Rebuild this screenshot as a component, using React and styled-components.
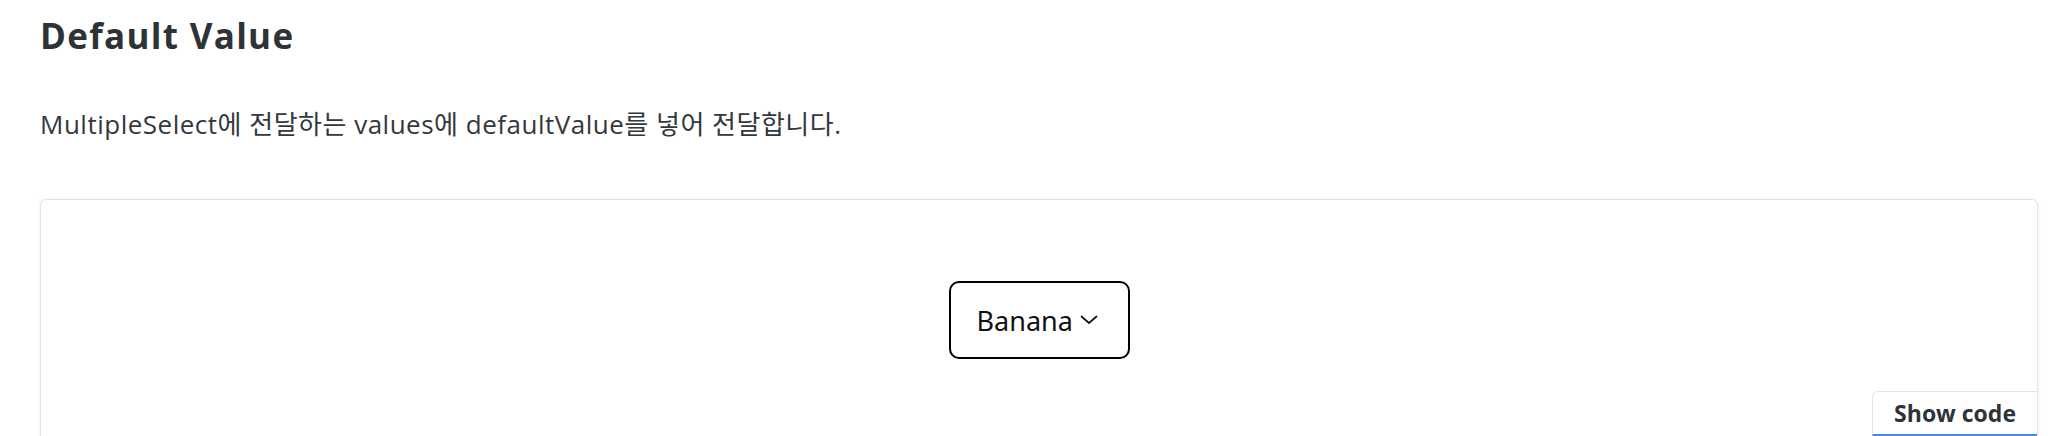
import React from 'react';
import styled, { createGlobalStyle } from 'styled-components';

const GlobalStyle = createGlobalStyle`
  html, body {
    margin: 0;
    padding: 0;
    background: #ffffff;
  }
  body {
    font-family: "Open Sans", "Noto Sans CJK KR", sans-serif;
    color: #2e3338;
  }
`;

const Page = styled.div`
  padding: 0 32px 0 40px;
`;

const Title = styled.h2`
  margin: 0;
  padding-top: 15px;
  font-family: "Open Sans", sans-serif;
  font-size: 35px;
  letter-spacing: 1.3px;
  line-height: 42px;
  font-weight: 700;
  color: #2e3338;
`;

const Description = styled.p`
  margin: 0;
  padding-top: 52px;
  font-family: "Open Sans", "Noto Sans CJK KR", sans-serif;
  font-size: 26px;
  letter-spacing: 0.5px;
  line-height: 30px;
  color: #33383d;
`;

const Preview = styled.div`
  position: relative;
  margin-top: 60px;
  height: 260px;
  border: 1px solid #e1e5ea;
  border-radius: 6px;
  box-shadow: rgba(0, 0, 0, 0.08) 0 1px 4px 0;
  background: #fff;
`;

const Stage = styled.div`
  display: flex;
  justify-content: center;
  padding-top: 81px;
`;

const SelectButton = styled.button`
  display: flex;
  align-items: center;
  gap: 7px;
  height: 78px;
  width: 181px;
  padding: 0 0 0 26px;
  border: 2px solid #000;
  border-radius: 10px;
  background: #fff;
  font-family: "Noto Sans", sans-serif;
  font-size: 27px;
  color: #111;
  cursor: pointer;
`;

const ShowCode = styled.button`
  position: absolute;
  top: 191px;
  right: 0;
  height: 45px;
  padding: 0 21px;
  border: none;
  border-top: 1px solid #e1e5ea;
  border-left: 1px solid #e1e5ea;
  border-bottom: 2px solid #3d8fe0;
  border-radius: 6px 0 0 0;
  background: #fff;
  font-family: "Open Sans", sans-serif;
  font-weight: 700;
  font-size: 23px;
  color: #2e3338;
  cursor: pointer;
`;

const Chevron = () => (
  <svg width="18" height="10" viewBox="0 0 18 10" fill="none">
    <path d="M1.5 1.5 L9 8 L16.5 1.5" stroke="#111" strokeWidth="1.7" strokeLinecap="round" strokeLinejoin="round" />
  </svg>
);

export default function App() {
  return (
    <Page>
      <GlobalStyle />
      <Title>Default Value</Title>
      <Description>MultipleSelect에 전달하는 values에 defaultValue를 넣어 전달합니다.</Description>
      <Preview>
        <Stage>
          <SelectButton>
            Banana
            <Chevron />
          </SelectButton>
        </Stage>
        <ShowCode>Show code</ShowCode>
      </Preview>
    </Page>
  );
}
